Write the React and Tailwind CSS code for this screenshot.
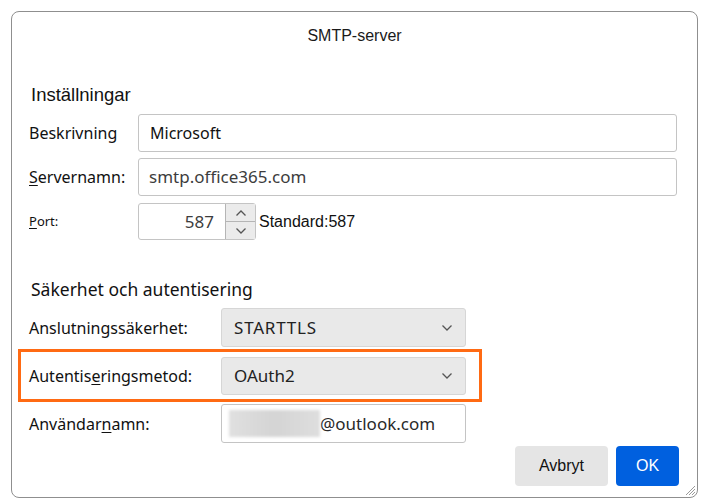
import React from 'react';

const sans = { fontFamily: '"Noto Sans", "Open Sans", sans-serif' };

const Chevron = ({ up, className }) => (
  <svg viewBox="0 0 12 8" className={className} fill="none" stroke="#555" strokeWidth="1.3">
    {up ? <path d="M1.5 6.5 L6 2 L10.5 6.5" /> : <path d="M1.5 1.5 L6 6 L10.5 1.5" />}
  </svg>
);

const Label = ({ children, className = '' }) => (
  <div className={`w-[192px] shrink-0 text-[16px] text-[#111] font-['Noto_Sans',sans-serif] ${className}`}>
    {children}
  </div>
);

const Select = ({ value, wide }) => (
  <div className="w-[245px] h-full flex items-center justify-between pl-[12px] pr-[12px] bg-[#e9e9e9] border border-[#d6d6d6] rounded-[3px]">
    <span className={`text-[17px] text-[#222] font-['Noto_Sans',sans-serif] ${wide ? 'tracking-[0.8px]' : ''}`}>{value}</span>
    <Chevron className="w-[12px] h-[8px]" />
  </div>
);

export default function App() {
  return (
    <div className="w-[703px] h-[502px] bg-white pt-[11px] pl-[11px] font-['Liberation_Sans',Arial,sans-serif]">
      <div className="relative w-[687px] h-[487px] border border-[#8f8f8f] rounded-[8px] flex flex-col pl-[17px]">
        <div className="h-[48px] -ml-[17px] flex items-center justify-center text-[16px] text-[#1a1a1a]">
          SMTP-server
        </div>

        <div className="mt-[25px] h-[20px] flex items-center pl-[2px] text-[18.5px] text-[#111]">Inställningar</div>

        <div className="mt-[9px] h-[38px] flex items-center">
          <div className="w-[109px] shrink-0 text-[16px] text-[#111]" style={sans}>Beskrivning</div>
          <div className="w-[539px] h-full flex items-center pl-[11px] border border-[#c4c4c4] rounded-[3px] text-[16px] text-[#111]" style={sans}>
            Microsoft
          </div>
        </div>

        <div className="mt-[6px] h-[38px] flex items-center">
          <div className="w-[109px] shrink-0 text-[16px] text-[#111]" style={sans}>
            <span className="underline underline-offset-2">S</span>ervernamn:
          </div>
          <div className="w-[539px] h-full flex items-center pl-[10px] border border-[#c4c4c4] rounded-[3px] text-[17px] text-[#3d3d3d]" style={sans}>
            smtp.office365.com
          </div>
        </div>

        <div className="mt-[7px] h-[37px] flex items-center">
          <div className="w-[109px] shrink-0 text-[13px] text-[#111]" style={sans}>
            <span className="underline underline-offset-2">P</span>ort:
          </div>
          <div className="w-[118px] h-full flex border border-[#c4c4c4] rounded-[3px]">
            <div className="flex-1 flex items-center justify-end pr-[11px] text-[17px] text-[#3d3d3d]" style={sans}>587</div>
            <div className="w-[30px] flex flex-col border-l border-[#b5b5b5]">
              <div className="flex-1 flex items-center justify-center bg-[#ebebeb] border-b border-[#b5b5b5]">
                <Chevron up className="w-[12px] h-[8px]" />
              </div>
              <div className="flex-1 flex items-center justify-center bg-[#ebebeb]">
                <Chevron className="w-[12px] h-[8px]" />
              </div>
            </div>
          </div>
          <div className="ml-[3px] text-[16px] text-[#111]">Standard:587</div>
        </div>

        <div className="mt-[39px] h-[20px] flex items-center pl-[2px] text-[17.5px] text-[#111]" style={sans}>
          Säkerhet och autentisering
        </div>

        <div className="mt-[9px] h-[39px] flex items-center">
          <Label>Anslutningssäkerhet:</Label>
          <Select value="STARTTLS" wide />
        </div>

        <div className="mt-[2px] -ml-[11px] w-[464px] h-[53px] border-[3px] border-[#ff6a13] pl-[8px] pt-[5px]">
          <div className="h-[38px] flex items-center">
            <Label>
              Autentis<span className="underline underline-offset-2">e</span>ringsmetod:
            </Label>
            <Select value="OAuth2" />
          </div>
        </div>

        <div className="mt-[2px] h-[39px] flex items-center">
          <Label>
            Användar<span className="underline underline-offset-2">n</span>amn:
          </Label>
          <div className="w-[245px] h-full flex items-center pl-[7px] border border-[#c4c4c4] rounded-[3px]">
            <div className="w-[91px] h-[27px] bg-gradient-to-r from-[#e0e0e0] via-[#d4d4d4] to-[#dedede] blur-[1.5px]" />
            <span className="text-[17px] text-[#2a2a2a]" style={sans}>@outlook.com</span>
          </div>
        </div>

        <div className="mt-[3px] flex justify-end gap-[8px] pr-[18px]">
          <button className="w-[93px] h-[40px] bg-[#e5e5e5] rounded-[4px] text-[16px] text-[#111]">Avbryt</button>
          <button className="w-[63px] h-[40px] bg-[#0060df] rounded-[4px] text-[16px] text-white">OK</button>
        </div>

        <svg className="absolute right-[1px] bottom-[1px] w-[12px] h-[12px]" viewBox="0 0 12 12" stroke="#9a9a9a" strokeWidth="1">
          <path d="M11 2 L2 11 M11 5 L5 11 M11 8 L8 11" />
        </svg>
      </div>
    </div>
  );
}
